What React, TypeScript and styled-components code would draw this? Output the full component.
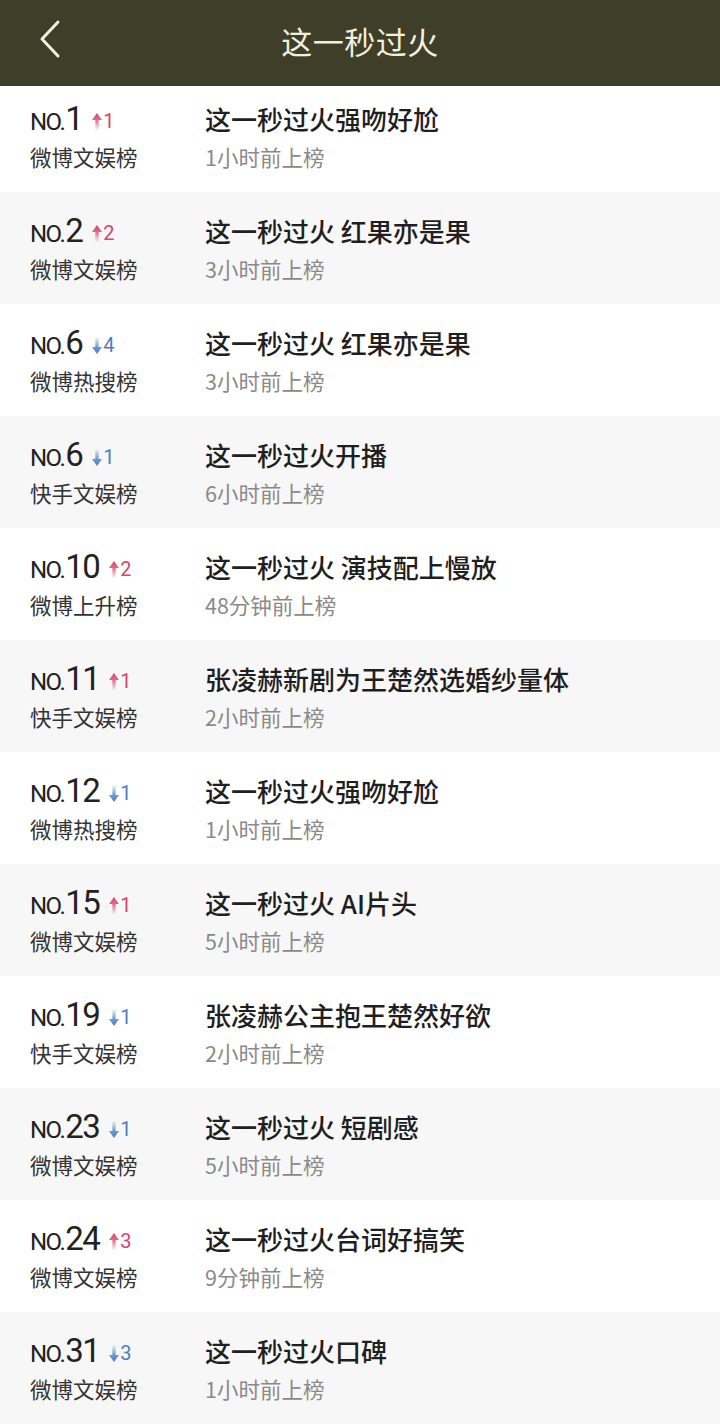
import React, { FC } from 'react'
import styled, { createGlobalStyle } from 'styled-components'

type Item = {
  rank: number
  change: number
  board: string
  title: string
  time: string
}

const items: Item[] = [
  { rank: 1, change: 1, board: '微博文娱榜', title: '这一秒过火强吻好尬', time: '1小时前上榜' },
  { rank: 2, change: 2, board: '微博文娱榜', title: '这一秒过火 红果亦是果', time: '3小时前上榜' },
  { rank: 6, change: -4, board: '微博热搜榜', title: '这一秒过火 红果亦是果', time: '3小时前上榜' },
  { rank: 6, change: -1, board: '快手文娱榜', title: '这一秒过火开播', time: '6小时前上榜' },
  { rank: 10, change: 2, board: '微博上升榜', title: '这一秒过火 演技配上慢放', time: '48分钟前上榜' },
  { rank: 11, change: 1, board: '快手文娱榜', title: '张凌赫新剧为王楚然选婚纱量体', time: '2小时前上榜' },
  { rank: 12, change: -1, board: '微博热搜榜', title: '这一秒过火强吻好尬', time: '1小时前上榜' },
  { rank: 15, change: 1, board: '微博文娱榜', title: '这一秒过火 AI片头', time: '5小时前上榜' },
  { rank: 19, change: -1, board: '快手文娱榜', title: '张凌赫公主抱王楚然好欲', time: '2小时前上榜' },
  { rank: 23, change: -1, board: '微博文娱榜', title: '这一秒过火 短剧感', time: '5小时前上榜' },
  { rank: 24, change: 3, board: '微博文娱榜', title: '这一秒过火台词好搞笑', time: '9分钟前上榜' },
  { rank: 31, change: -3, board: '微博文娱榜', title: '这一秒过火口碑', time: '1小时前上榜' },
]

const UP = '#d9456d'
const DOWN = '#4a80c4'

// small arrow with a tail that fades out
const Arrow: FC<{ up: boolean; id: string }> = ({ up, id }) => {
  const color = up ? UP : DOWN
  return (
    <svg width="10" height="17" viewBox="0 0 10 17">
      <defs>
        <linearGradient id={id} x1="0" y1={up ? '0' : '1'} x2="0" y2={up ? '1' : '0'}>
          <stop offset="0" stopColor={color} />
          <stop offset="0.4" stopColor={color} stopOpacity="0.8" />
          <stop offset="1" stopColor={color} stopOpacity="0.05" />
        </linearGradient>
      </defs>
      {up ? (
        <path d="M5 0 L10 7 L6.7 7 L6.7 17 L3.3 17 L3.3 7 L0 7 Z" fill={`url(#${id})`} />
      ) : (
        <path d="M5 17 L10 10 L6.7 10 L6.7 0 L3.3 0 L3.3 10 L0 10 Z" fill={`url(#${id})`} />
      )}
    </svg>
  )
}

const App: FC = () => (
  <>
    <GlobalStyle />
    <Page>
      <Header>
        <Back>
          <svg width="24" height="40" viewBox="0 0 24 40">
            <path d="M20 3 L4 20 L20 37" fill="none" stroke="#f3efdc" strokeWidth="3" strokeLinecap="round" strokeLinejoin="round" />
          </svg>
        </Back>
        <HeaderTitle>这一秒过火</HeaderTitle>
      </Header>

      <List>
        {items.map((item, i) => {
          const up = item.change > 0
          return (
            <Row key={i} shaded={i % 2 === 1}>
              <Rank>
                <No>NO.</No>
                <RankNum>{item.rank}</RankNum>
                <Change up={up}>
                  <Arrow up={up} id={`arr${i}`} />
                  {Math.abs(item.change)}
                </Change>
              </Rank>
              <Title>{item.title}</Title>
              <Board>{item.board}</Board>
              <Time>{item.time}</Time>
            </Row>
          )
        })}
      </List>
    </Page>
  </>
)

export default App

const GlobalStyle = createGlobalStyle`
  html, body {
    margin: 0;
    padding: 0;
    background: #ffffff;
  }
  body {
    font-family: "Noto Sans CJK SC", "Noto Sans", sans-serif;
  }
`
const Page = styled.div`
  width: 720px;
  height: 1424px;
  overflow: hidden;
  background: #ffffff;
`
const Header = styled.div`
  position: relative;
  display: flex;
  align-items: center;
  justify-content: center;
  height: 86px;
  background: #3f3e28;
`
const Back = styled.div`
  position: absolute;
  left: 38px;
  top: 19px;
  display: flex;
`
const HeaderTitle = styled.h1`
  margin: 0 0 6px;
  color: #f3efdc;
  font-size: 31px;
  font-weight: 400;
  letter-spacing: 0.5px;
`
const List = styled.div`
  display: flex;
  flex-direction: column;
`
const Row = styled.div<{ shaded: boolean }>`
  display: grid;
  grid-template-columns: 175px 1fr;
  grid-template-rows: 40px 36px;
  height: 112px;
  box-sizing: border-box;
  padding: 19px 30px 0;
  background: ${(p) => (p.shaded ? '#f7f7f7' : '#ffffff')};

  &:first-child {
    height: 106px;
    padding-top: 13px;
  }
`
const Rank = styled.div`
  display: flex;
  align-items: baseline;
  color: #222;
  font-family: Roboto, "Liberation Sans", sans-serif;
  line-height: 40px;
`
const No = styled.span`
  font-size: 24px;
  letter-spacing: -1.5px;
  margin-right: 1px;
`
const RankNum = styled.span`
  font-size: 33px;
  letter-spacing: -1.5px;
`
const Change = styled.span<{ up: boolean }>`
  display: inline-flex;
  align-items: flex-end;
  gap: 1px;
  margin-left: 10px;
  color: ${(p) => (p.up ? UP : DOWN)};
  font-size: 20px;
  line-height: 1;

  svg {
    margin-bottom: 1px;
  }
`
const Title = styled.div`
  color: #1f1f1f;
  font-size: 26px;
  font-weight: 500;
  line-height: 40px;
  white-space: nowrap;
`
const Board = styled.div`
  color: #333;
  font-size: 21.5px;
  line-height: 36px;
`
const Time = styled.div`
  color: #8a8a8a;
  font-size: 21.5px;
  line-height: 36px;
`
